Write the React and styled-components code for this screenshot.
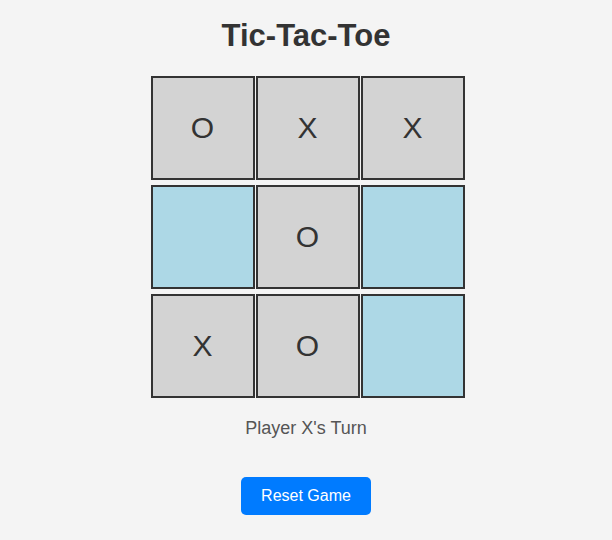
import React, { useState } from "react";
import styled, { createGlobalStyle } from "styled-components";

const GlobalStyle = createGlobalStyle`
  body {
    margin: 0;
    background: #f4f4f4;
    font-family: "Liberation Sans", Arial, sans-serif;
  }
`;

const initialBoard = ["O", "X", "X", "", "O", "", "X", "O", ""];

export default function App() {
  const [board, setBoard] = useState(initialBoard);
  const [player, setPlayer] = useState("X");

  const play = (i) => {
    if (board[i]) return;
    const next = [...board];
    next[i] = player;
    setBoard(next);
    setPlayer(player === "X" ? "O" : "X");
  };

  const reset = () => {
    setBoard(Array(9).fill(""));
    setPlayer("X");
  };

  return (
    <>
      <GlobalStyle />
      <Wrapper>
        <Title>Tic-Tac-Toe</Title>
        <Board>
          {board.map((v, i) => (
            <Cell key={i} $empty={!v} onClick={() => play(i)}>
              {v}
            </Cell>
          ))}
        </Board>
        <Status>Player {player}'s Turn</Status>
        <ResetButton onClick={reset}>Reset Game</ResetButton>
      </Wrapper>
    </>
  );
}

const Wrapper = styled.div`
  display: flex;
  flex-direction: column;
  align-items: center;
  padding-top: 18px;
`;

const Title = styled.h1`
  font-size: 31px;
  font-weight: 700;
  color: #333;
  margin: 0 0 22px;
  line-height: 36px;
`;

const Board = styled.div`
  display: grid;
  grid-template-columns: repeat(3, 104px);
  grid-auto-rows: 104px;
  column-gap: 1px;
  row-gap: 5px;
  margin-left: 3px;
`;

const Cell = styled.div`
  box-sizing: border-box;
  border: 2px solid #333;
  background: ${(p) => (p.$empty ? "#add8e6" : "#d3d3d3")};
  display: flex;
  align-items: center;
  justify-content: center;
  font-size: 30px;
  color: #333;
  cursor: pointer;
`;

const Status = styled.p`
  font-size: 18px;
  color: #555;
  margin: 20px 0 0;
  line-height: 21px;
`;

const ResetButton = styled.button`
  margin-top: 38px;
  background: #007bff;
  color: #fff;
  border: none;
  border-radius: 5px;
  padding: 10px 20px;
  font-family: "Liberation Sans", Arial, sans-serif;
  font-size: 16px;
  line-height: 18px;
  cursor: pointer;
`;
